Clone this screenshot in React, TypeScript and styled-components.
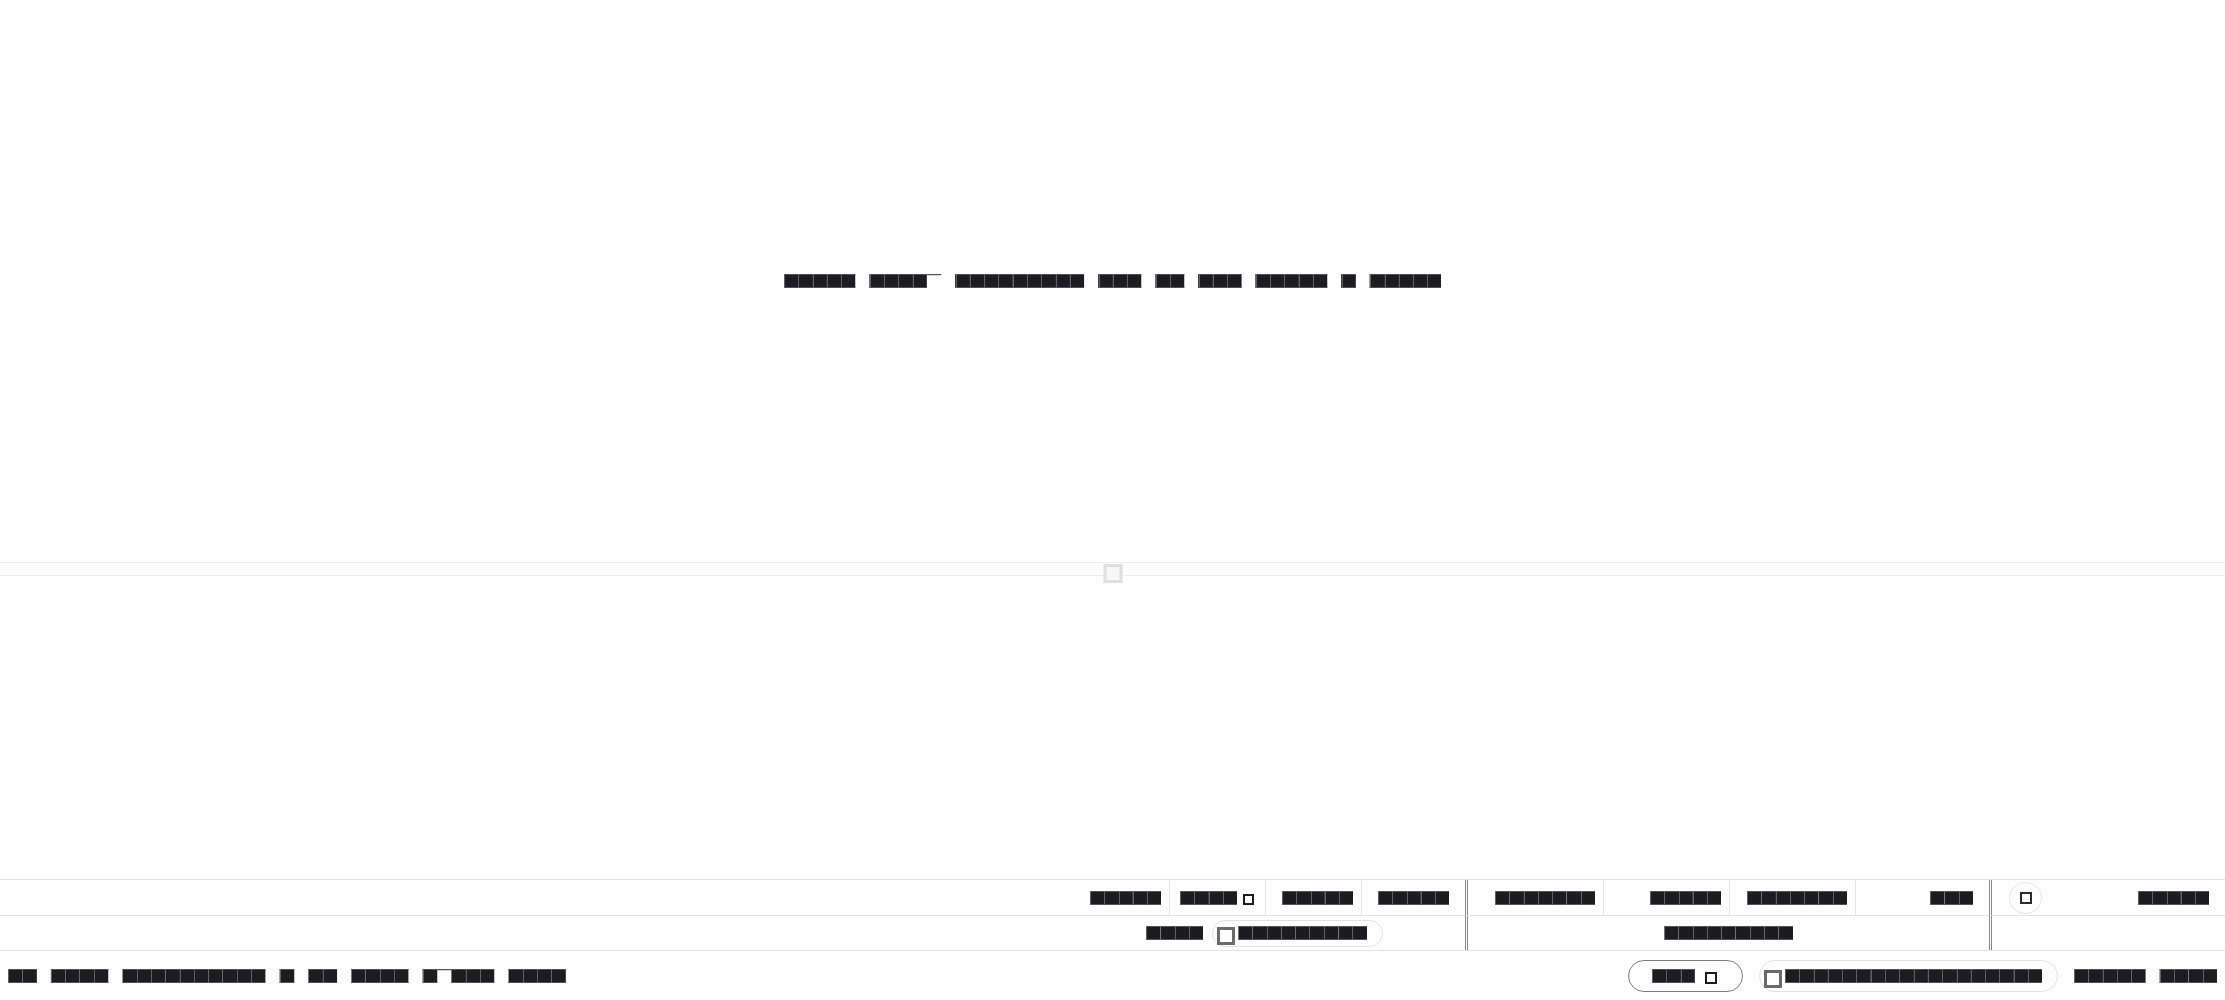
import { createGlobalStyle, styled } from "styled-components";

const GlobalStyle = createGlobalStyle`
  html, body {
    margin: 0;
    padding: 0;
    background: #fdfdfd;
  }
  body {
    font-family: "DejaVu Sans Mono", monospace;
  }
`;

const Page = styled.div`
  height: 1000px;
  display: flex;
  flex-direction: column;
  overflow: hidden;
`;

const EditorPane = styled.div`
  height: 562px;
  display: flex;
  align-items: center;
  justify-content: center;
`;

// redacted text: full blocks squashed to a 14.3px strip; the glyphs are filled
// with a pattern that gives every cell a thin grey outline
const Redact = styled.span`
  display: inline-block;
  font-family: "DejaVu Sans Mono", monospace;
  font-size: 23.75px;
  line-height: normal;
  color: #1c1c21;
  white-space: pre;
  transform: scaleY(0.517);
  background:
    linear-gradient(#616167, #616167) top / 100% 2px no-repeat,
    linear-gradient(#616167, #616167) bottom / 100% 2px no-repeat,
    repeating-linear-gradient(90deg, #616167 0 1px, #1c1c21 1px 1ch);
  -webkit-background-clip: text;
  background-clip: text;
  -webkit-text-fill-color: transparent;
`;

const Resizer = styled.div`
  position: relative;
  height: 14px;
  box-sizing: border-box;
  border-top: 1px solid #ececec;
  border-bottom: 1px solid #ececec;
`;

const Handle = styled.span`
  position: absolute;
  left: 50%;
  top: 1px;
  transform: translateX(-50%);
  width: 19px;
  height: 19px;
  box-sizing: border-box;
  border: 3px solid #dedede;
  background: #f7f7f7;
`;

const LowerPane = styled.div`
  flex: 1;
`;

const Table = styled.div`
  display: grid;
  grid-template-columns: 1169px 96px 96px 104px 138px 126px 126px 134px 1fr;
  grid-template-rows: 36px 34px;
  border-top: 1px solid #e1e1e6;
`;

const Cell = styled.div<{ $edge?: "none" | "thin" | "group"; $last?: boolean; $span?: number }>`
  display: flex;
  align-items: center;
  justify-content: flex-end;
  gap: 6px;
  box-sizing: border-box;
  padding: 0 ${(p) => (p.$last ? 16 : 8)}px 0 8px;
  grid-column: span ${(p) => p.$span ?? 1};
  border-left: ${(p) =>
    p.$edge === "group" ? "3px double #86868a" : p.$edge === "thin" ? "1px solid #e1e1e6" : "none"};
`;

const HeadCell = styled(Cell)`
  border-bottom: 1px solid #e1e1e6;
`;

const GroupLabel = styled(Cell)`
  justify-content: center;
`;

const FilterCell = styled(Cell)`
  padding-right: 82px;
  gap: 9px;
`;

const ToolCell = styled(HeadCell)`
  justify-content: space-between;
  padding-left: 17px;
`;

const Square = styled.span<{ $size: number; $bw: number; $color: string; $drop?: number; $right?: number }>`
  display: inline-block;
  flex: none;
  width: ${(p) => p.$size}px;
  height: ${(p) => p.$size}px;
  box-sizing: border-box;
  border: ${(p) => p.$bw}px solid ${(p) => p.$color};
  background: #fff;
  margin-top: ${(p) => p.$drop ?? 0}px;
  margin-right: ${(p) => p.$right ?? 0}px;
`;

const RoundButton = styled.span`
  display: flex;
  align-items: center;
  justify-content: center;
  width: 33px;
  height: 32px;
  box-sizing: border-box;
  border: 1px solid #e6e6e6;
  border-radius: 50%;
`;

const Chip = styled.span<{ $h: number }>`
  display: inline-flex;
  align-items: center;
  gap: 3px;
  height: ${(p) => p.$h}px;
  box-sizing: border-box;
  padding: 0 15px 0 4px;
  border: 1px solid #e2e2e2;
  border-radius: ${(p) => p.$h / 2}px;
`;

const OutlineButton = styled.span`
  display: inline-flex;
  align-items: center;
  gap: 10px;
  height: 32px;
  box-sizing: border-box;
  padding: 0 25px 0 23px;
  border: 1px solid #7d7d7d;
  border-radius: 16px;
`;

const StatusBar = styled.div`
  height: 50px;
  box-sizing: border-box;
  border-top: 1px solid #e1e1e6;
  display: flex;
  align-items: center;
  justify-content: space-between;
  padding: 0 8px;
`;

const StatusRight = styled.div`
  display: flex;
  align-items: center;
  gap: 16px;
`;

const headers: { text: string; edge: "none" | "thin" | "group"; last?: boolean; icon?: boolean }[] = [
  { text: "█████", edge: "none" },
  { text: "████", edge: "thin", icon: true },
  { text: "█████", edge: "thin" },
  { text: "█████", edge: "thin", last: true },
  { text: "███████", edge: "group" },
  { text: "█████", edge: "thin" },
  { text: "███████", edge: "thin" },
  { text: "███", edge: "thin", last: true },
];

export default function App() {
  return (
    <>
      <GlobalStyle />
      <Page>
        <EditorPane>
          <Redact>█████ ████▔ █████████ ███ ██ ███ █████ █ █████</Redact>
        </EditorPane>

        <Resizer>
          <Handle />
        </Resizer>

        <LowerPane />

        <Table>
          {headers.map((h, i) => (
            <HeadCell key={i} $edge={h.edge} $last={h.last}>
              <Redact>{h.text}</Redact>
              {h.icon && <Square $size={11} $bw={2} $color="#1c1c21" $drop={3} $right={3} />}
            </HeadCell>
          ))}
          <ToolCell $edge="group" $last>
            <RoundButton>
              <Square $size={12} $bw={2} $color="#2a2a2e" />
            </RoundButton>
            <Redact>█████</Redact>
          </ToolCell>

          <FilterCell $edge="none" $span={4}>
            <Redact>████</Redact>
            <Chip $h={27}>
              <Square $size={18} $bw={3} $color="#6a6a6a" $drop={6} />
              <Redact>█████████</Redact>
            </Chip>
          </FilterCell>
          <GroupLabel $edge="group" $span={4}>
            <Redact>█████████</Redact>
          </GroupLabel>
          <Cell $edge="group" />
        </Table>

        <StatusBar>
          <Redact>██ ████ ██████████ █ ██ ████ █▔███ ████</Redact>
          <StatusRight>
            <OutlineButton>
              <Redact>███</Redact>
              <Square $size={12} $bw={2} $color="#1c1c21" $drop={5} />
            </OutlineButton>
            <Chip $h={32}>
              <Square $size={18} $bw={3} $color="#6a6a6a" $drop={7} />
              <Redact>██████████████████</Redact>
            </Chip>
            <Redact>█████ ████</Redact>
          </StatusRight>
        </StatusBar>
      </Page>
    </>
  );
}
